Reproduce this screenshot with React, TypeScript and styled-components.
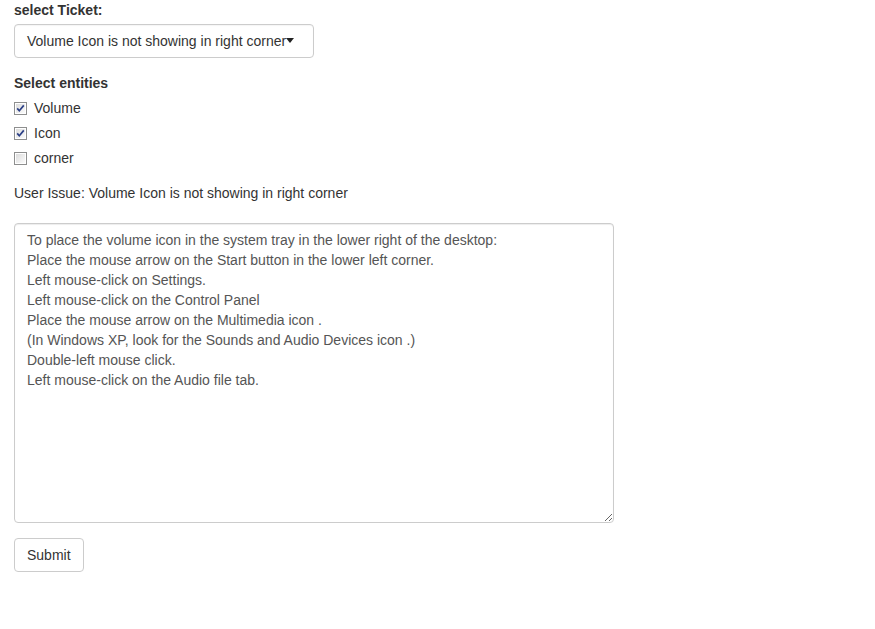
import React from "react";
import styled, { createGlobalStyle } from "styled-components";

const GlobalStyle = createGlobalStyle`
  html, body { margin: 0; padding: 0; background: #fff; }
  body {
    font-family: "Liberation Sans", Arial, sans-serif;
    font-size: 14px;
    line-height: 20px;
    color: #333;
  }
  * { box-sizing: border-box; }
`;

const Page = styled.div`
  padding: 0 14px;
  display: flex;
  flex-direction: column;
`;

const FormGroup = styled.div`
  display: flex;
  flex-direction: column;
  align-items: flex-start;
  margin-bottom: 15px;
`;

const Label = styled.label<{ $gap?: number }>`
  font-weight: bold;
  line-height: 20px;
  margin-bottom: ${(p) => p.$gap ?? 5}px;
`;

const SelectBox = styled.div`
  width: 300px;
  height: 34px;
  border: 1px solid #ccc;
  border-radius: 4px;
  padding: 6px 12px;
  display: flex;
  align-items: center;
  color: #333;
  background: #fff;
  white-space: nowrap;
  box-shadow: inset 0 1px 1px rgba(0, 0, 0, 0.04);
`;

const Caret = styled.span`
  display: inline-block;
  width: 0;
  height: 0;
  border-left: 4.5px solid transparent;
  border-right: 4.5px solid transparent;
  border-top: 5px solid #222;
  margin-left: 0;
  margin-top: -2px;
`;

const CheckList = styled.div`
  display: flex;
  flex-direction: column;
  gap: 5px;
`;

const CheckRow = styled.label`
  display: flex;
  align-items: center;
  height: 20px;
  gap: 7px;
`;

const Box = styled.svg`
  width: 13px;
  height: 13px;
  flex: none;
`;

const Check = ({ checked }: { checked: boolean }) => (
  <Box viewBox="0 0 13 13">
    <defs>
      <linearGradient id={checked ? "gc" : "gu"} x1="0" y1="0" x2="1" y2="1">
        <stop offset="0" stopColor="#dcdcdc" />
        <stop offset="1" stopColor="#fbfbfb" />
      </linearGradient>
    </defs>
    <rect x="0.5" y="0.5" width="12" height="12" fill="#fff" stroke="#8e8f8f" />
    <rect x="2" y="2" width="9" height="9" fill={`url(#${checked ? "gc" : "gu"})`} />
    {checked && (
      <path d="M3.2 6.4 L5.3 8.8 L9.8 3.4" fill="none" stroke="#2b3f86" strokeWidth="1.7" />
    )}
  </Box>
);

const IssueText = styled.div`
  line-height: 20px;
  margin-bottom: 20px;
`;

const TextArea = styled.textarea`
  width: 600px;
  height: 300px;
  border: 1px solid #ccc;
  border-radius: 4px;
  padding: 6px 12px;
  font-family: "Liberation Sans", Arial, sans-serif;
  font-size: 14px;
  line-height: 20px;
  color: #555;
  margin: 0 0 15px 0;
  box-shadow: inset 0 1px 1px rgba(0, 0, 0, 0.075);
  outline: none;
  resize: both;
  display: block;
`;

const Button = styled.button`
  align-self: flex-start;
  height: 34px;
  padding: 6px 12px;
  border: 1px solid #ccc;
  border-radius: 4px;
  background: #fff;
  color: #333;
  font-family: "Liberation Sans", Arial, sans-serif;
  font-size: 14px;
  line-height: 20px;
`;

const body = [
  "To place the volume icon in the system tray in the lower right of the desktop:",
  "Place the mouse arrow on the Start button in the lower left corner.",
  "Left mouse-click on Settings.",
  "Left mouse-click on the Control Panel",
  "Place the mouse arrow on the Multimedia icon .",
  "(In Windows XP, look for the Sounds and Audio Devices icon .)",
  "Double-left mouse click.",
  "Left mouse-click on the Audio file tab.",
].join("\n");

export default function App() {
  const items = [
    { label: "Volume", checked: true },
    { label: "Icon", checked: true },
    { label: "corner", checked: false },
  ];
  return (
    <>
      <GlobalStyle />
      <Page>
        <FormGroup>
          <Label $gap={4}>select Ticket:</Label>
          <SelectBox>
            <span>Volume Icon is not showing in right corner</span>
            <Caret />
          </SelectBox>
        </FormGroup>
        <FormGroup>
          <Label>Select entities</Label>
          <CheckList>
            {items.map((it) => (
              <CheckRow key={it.label}>
                <Check checked={it.checked} />
                <span>{it.label}</span>
              </CheckRow>
            ))}
          </CheckList>
        </FormGroup>
        <IssueText>User Issue: Volume Icon is not showing in right corner</IssueText>
        <TextArea readOnly value={body} />
        <Button>Submit</Button>
      </Page>
    </>
  );
}
